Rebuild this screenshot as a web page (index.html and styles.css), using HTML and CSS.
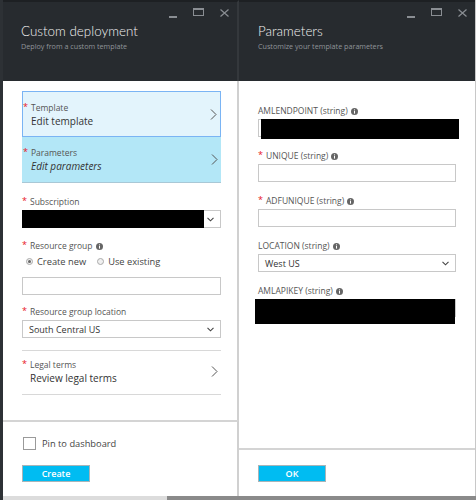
FILE: index.html
```html
<!DOCTYPE html>
<html>
<head>
<meta charset="utf-8">
<link rel="stylesheet" href="styles.css">
</head>
<body>
<div class="screen">
  <div class="blades">
    <section class="blade blade-left">
      <header class="blade-head">
        <div class="controls">
          <span class="ctl-min"></span>
          <span class="ctl-max"></span>
          <svg class="ctl-close" width="9" height="8" viewBox="0 0 9 8"><path d="M0.5 0.5 L8.5 7.5 M8.5 0.5 L0.5 7.5" stroke="#8a8e93" stroke-width="1.2" fill="none"/></svg>
        </div>
        <h1 class="title">Custom deployment</h1>
        <p class="subtitle">Deploy from a custom template</p>
      </header>
      <div class="blade-body">
        <div class="nav-item nav-template">
          <div class="nav-text">
            <div class="lbl"><span class="req">*</span>Template</div>
            <div class="nav-value">Edit template</div>
          </div>
          <svg class="chev" width="7" height="11" viewBox="0 0 7 11"><polyline points="1,0.5 6,5.5 1,10.5" fill="none" stroke="#555" stroke-width="1"/></svg>
        </div>
        <div class="nav-item nav-params">
          <div class="nav-text">
            <div class="lbl"><span class="req">*</span>Parameters</div>
            <div class="nav-value italic">Edit parameters</div>
          </div>
          <svg class="chev" width="7" height="11" viewBox="0 0 7 11"><polyline points="1,0.5 6,5.5 1,10.5" fill="none" stroke="#555" stroke-width="1"/></svg>
        </div>

        <div class="field f-sub">
          <div class="lbl"><span class="req">*</span>Subscription</div>
          <div class="select">
            <span class="redact redact-sub"></span>
            <svg class="sel-chev" width="7" height="5" viewBox="0 0 7 5"><polyline points="0.5,0.8 3.5,3.8 6.5,0.8" fill="none" stroke="#444" stroke-width="1.1"/></svg>
          </div>
        </div>

        <div class="field f-rg">
          <div class="lbl"><span class="req">*</span>Resource group <svg class="info" width="7" height="7" viewBox="0 0 7 7"><circle cx="3.5" cy="3.5" r="3.5" fill="#666"/><rect x="3" y="3" width="1" height="2.6" fill="#fff"/><rect x="3" y="1.4" width="1" height="1" fill="#fff"/></svg></div>
          <div class="radios">
            <span class="radio on"></span><span class="radio-lbl">Create new</span>
            <span class="radio"></span><span class="radio-lbl">Use existing</span>
          </div>
          <div class="input input-rg"></div>
        </div>

        <div class="field f-loc">
          <div class="lbl"><span class="req">*</span>Resource group location</div>
          <div class="select">
            <span class="sel-text">South Central US</span>
            <svg class="sel-chev" width="7" height="5" viewBox="0 0 7 5"><polyline points="0.5,0.8 3.5,3.8 6.5,0.8" fill="none" stroke="#444" stroke-width="1.1"/></svg>
          </div>
        </div>

        <div class="legal">
          <div class="nav-text">
            <div class="lbl"><span class="req">*</span>Legal terms</div>
            <div class="nav-value">Review legal terms</div>
          </div>
          <svg class="chev" width="7" height="11" viewBox="0 0 7 11"><polyline points="1,0.5 6,5.5 1,10.5" fill="none" stroke="#555" stroke-width="1"/></svg>
        </div>
      </div>
      <footer class="blade-foot foot-left">
        <label class="pin"><span class="checkbox"></span><span>Pin to dashboard</span></label>
        <button class="btn">Create</button>
      </footer>
    </section>

    <section class="blade blade-right">
      <header class="blade-head head-right">
        <div class="controls">
          <span class="ctl-min"></span>
          <span class="ctl-max"></span>
          <svg class="ctl-close" width="9" height="8" viewBox="0 0 9 8"><path d="M0.5 0.5 L8.5 7.5 M8.5 0.5 L0.5 7.5" stroke="#8a8e93" stroke-width="1.2" fill="none"/></svg>
        </div>
        <h1 class="title">Parameters</h1>
        <p class="subtitle">Customize your template parameters</p>
      </header>
      <div class="blade-body body-right">
        <div class="pfield p1">
          <div class="lbl">AMLENDPOINT (string) <svg class="info" width="7" height="7" viewBox="0 0 7 7"><circle cx="3.5" cy="3.5" r="3.5" fill="#666"/><rect x="3" y="3" width="1" height="2.6" fill="#fff"/><rect x="3" y="1.4" width="1" height="1" fill="#fff"/></svg></div>
          <div class="input"><span class="redact redact-ep"></span></div>
        </div>
        <div class="pfield">
          <div class="lbl"><span class="req">*</span>UNIQUE (string) <svg class="info" width="7" height="7" viewBox="0 0 7 7"><circle cx="3.5" cy="3.5" r="3.5" fill="#666"/><rect x="3" y="3" width="1" height="2.6" fill="#fff"/><rect x="3" y="1.4" width="1" height="1" fill="#fff"/></svg></div>
          <div class="input"></div>
        </div>
        <div class="pfield">
          <div class="lbl"><span class="req">*</span>ADFUNIQUE (string) <svg class="info" width="7" height="7" viewBox="0 0 7 7"><circle cx="3.5" cy="3.5" r="3.5" fill="#666"/><rect x="3" y="3" width="1" height="2.6" fill="#fff"/><rect x="3" y="1.4" width="1" height="1" fill="#fff"/></svg></div>
          <div class="input"></div>
        </div>
        <div class="pfield">
          <div class="lbl">LOCATION (string) <svg class="info" width="7" height="7" viewBox="0 0 7 7"><circle cx="3.5" cy="3.5" r="3.5" fill="#666"/><rect x="3" y="3" width="1" height="2.6" fill="#fff"/><rect x="3" y="1.4" width="1" height="1" fill="#fff"/></svg></div>
          <div class="select">
            <span class="sel-text">West US</span>
            <svg class="sel-chev" width="7" height="5" viewBox="0 0 7 5"><polyline points="0.5,0.8 3.5,3.8 6.5,0.8" fill="none" stroke="#444" stroke-width="1.1"/></svg>
          </div>
        </div>
        <div class="pfield">
          <div class="lbl">AMLAPIKEY (string) <svg class="info" width="7" height="7" viewBox="0 0 7 7"><circle cx="3.5" cy="3.5" r="3.5" fill="#666"/><rect x="3" y="3" width="1" height="2.6" fill="#fff"/><rect x="3" y="1.4" width="1" height="1" fill="#fff"/></svg></div>
          <div class="input"><span class="redact redact-key"></span></div>
        </div>
      </div>
      <footer class="blade-foot foot-right">
        <button class="btn">OK</button>
      </footer>
    </section>
  </div>
  <div class="hscroll"><span class="hs-thumb"></span><span class="hs-track"></span></div>
</div>
</body>
</html>
```

FILE: styles.css
```css
* { box-sizing: border-box; }
html, body { margin: 0; padding: 0; }
body {
  width: 476px;
  height: 500px;
  overflow: hidden;
  font-family: "Open Sans", "Noto Sans", sans-serif;
  color: #333;
  background: #fff;
}
.screen { display: flex; flex-direction: column; height: 500px; }
.blades { display: flex; height: 496px; }

.blade { display: flex; flex-direction: column; height: 100%; }
.blade-left { width: 239px; border-left: 3px solid #2d3135; }
.blade-right { width: 237px; border-right: 1px solid #c8c8c8; }

.blade-head {
  height: 81px;
  background: #272b2f;
  border-top: 2px solid #1d2023;
  padding: 6px 8px 0 18px;
  display: flex;
  flex-direction: column;
}
.blade-left .blade-head { border-right: 2px solid #34383c; }
.blade-left .blade-body,
.blade-left .blade-foot { border-right: 2px solid #d0d0d0; }
.head-right { padding: 6px 8px 0 19px; }
.controls { display: flex; justify-content: flex-end; align-items: flex-start; height: 10px; }
.ctl-min { width: 8px; height: 1.5px; background: #8a8e93; margin-top: 8px; margin-right: 16px; }
.ctl-max { width: 11px; height: 8px; border: 1px solid #8a8e93; border-top-width: 2.5px; margin-right: 16px; }
.ctl-close { margin-top: 1px; }
.title {
  margin: 4px 0 0;
  font-family: "Lato", "Open Sans", sans-serif;
  font-size: 13.4px;
  font-weight: 300;
  color: #f2f2f2;
  line-height: 19px;
}
.subtitle {
  margin: 0;
  font-size: 7.2px;
  line-height: 10px;
  color: #8f9499;
}

.blade-body { flex: 1; padding: 10px 16px 0 19px; }
.body-right { padding: 24px 19px 0 19px; }

.lbl {
  font-size: 8.5px;
  line-height: 12px;
  color: #555;
  display: flex;
  align-items: center;
  white-space: nowrap;
}
.req { color: #e81123; font-size: 9px; margin-right: 3px; position: relative; top: -1px; }
.info { margin-left: 3px; }

.nav-item {
  height: 46px;
  display: flex;
  align-items: center;
  padding: 0 3px 0 0;
}
.nav-template { background: #e3f4fc; border: 1px solid #7ab4f4; }
.nav-params { background: #b3e7f7; border-bottom: 1px solid #a9c8d6; }
.nav-text { flex: 1; padding-top: 1px; }
.nav-value { font-size: 10px; line-height: 14px; color: #333; padding-left: 8px; }
.nav-params .nav-text { padding-left: 1px; }
.italic { font-style: italic; }

.field { margin-top: 13px; }
.f-rg { margin-top: 12px; }
.f-loc { margin-top: 11px; }
.select {
  margin-top: 2px;
  height: 18px;
  border: 1px solid #c8c8c8;
  display: flex;
  align-items: center;
  padding: 0 6px 0 6px;
  position: relative;
}
.sel-text { flex: 1; font-size: 9px; color: #333; }
.redact { position: absolute; background: #000; }
.redact-sub { left: -1px; top: -1px; width: 182px; height: 18px; }
.sel-chev { margin-left: auto; }

.radios { display: flex; align-items: center; height: 14px; margin-top: 2px; padding-left: 4px; }
.radio {
  width: 7px; height: 7px; border-radius: 50%;
  border: 1px solid #aaa; background: #f0f0f0;
  margin-right: 4px; position: relative;
}
.radio.on::after {
  content: ""; position: absolute; left: 1px; top: 1px; width: 3px; height: 3px;
  border-radius: 50%; background: #666;
}
.radio-lbl { font-size: 9.3px; color: #444; margin-right: 11px; }
.input { height: 18px; border: 1px solid #c8c8c8; position: relative; }
.input-rg { margin-top: 9px; }

.legal {
  margin-top: 12px;
  border-top: 1px solid #d8d8d8;
  border-bottom: 1px solid #d8d8d8;
  height: 45px;
  display: flex;
  align-items: center;
  padding: 0 3px 2px 0;
}

.blade-foot { border-top: 2px solid #d4d4d4; }
.foot-left { height: 76px; padding: 15px 16px 0 19px; }
.foot-right { height: 48px; padding: 15px 19px 0 19px; }
.pin { display: flex; align-items: center; font-size: 9.3px; color: #444; }
.checkbox { width: 13px; height: 13px; border: 1px solid #9a9a9a; margin: 0 6px 0 1px; }
.btn {
  display: block;
  width: 68px; height: 17px;
  background: #00bcf2;
  border: 1px solid #a8b4b8;
  color: #fff;
  font-family: "Open Sans", sans-serif;
  font-size: 9px;
  font-weight: 600;
  padding: 0;
  line-height: 15px;
}
.foot-left .btn { margin-top: 15px; }

.pfield { margin-top: 13px; }
.pfield.p1 { margin-top: 0; }
.pfield .input, .pfield .select { margin-top: 2px; }
.redact-ep { left: 2px; top: -1px; width: 198px; height: 20px; }
.redact-key { left: -4px; top: -1px; width: 200px; height: 25px; }

.hscroll { height: 4px; display: flex; }
.hs-thumb { width: 167px; background: #dcdcdc; border-left: 3px solid #2d3135; }
.hs-track { flex: 1; background: #8a8a8a; }
```
